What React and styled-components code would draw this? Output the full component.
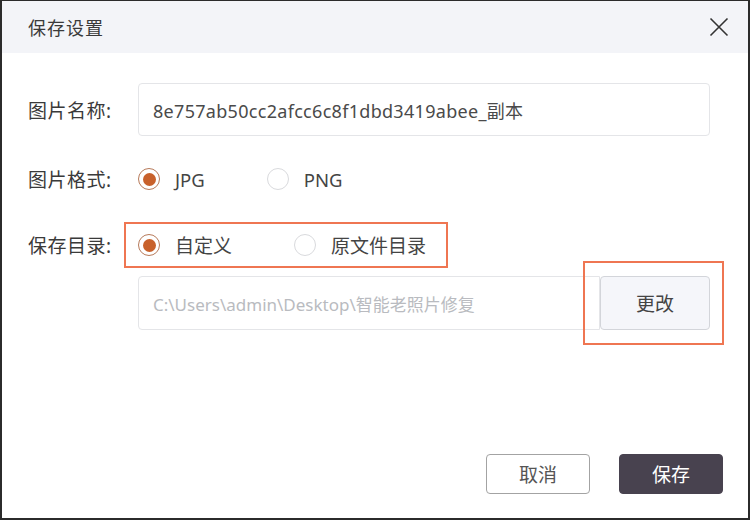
import styled, { createGlobalStyle } from "styled-components";

const GlobalStyle = createGlobalStyle`
  * { box-sizing: border-box; }
  html, body { margin: 0; padding: 0; background: #fff; }
  body {
    font-family: "Noto Sans", "Noto Sans CJK SC", sans-serif;
    color: #333;
  }
`;

const Dialog = styled.div`
  width: 750px;
  height: 520px;
  display: flex;
  flex-direction: column;
  background: #fff;
  border-style: solid;
  border-color: #2b2b2b;
  border-width: 1px 2px 2px 2px;
`;

const Header = styled.div`
  height: 52px;
  flex: none;
  display: flex;
  align-items: center;
  justify-content: space-between;
  padding: 0 16px 0 26px;
  background: #f3f4f8;
`;

const Title = styled.div`
  font-size: 18px;
  color: #3a3a3a;
  letter-spacing: 1px;
`;

const CloseButton = styled.button`
  width: 26px;
  height: 26px;
  padding: 0;
  border: none;
  background: transparent;
  display: flex;
  align-items: center;
  justify-content: center;
  cursor: pointer;
`;

const Body = styled.div`
  flex: 1;
  display: flex;
  flex-direction: column;
  padding: 30px 38px 0 26px;
`;

const Row = styled.div`
  display: flex;
  align-items: center;
  height: ${(p) => p.$h}px;
  margin-top: ${(p) => p.$mt || 0}px;
`;

const Label = styled.div`
  width: 110px;
  flex: none;
  font-size: 19px;
  color: #3a3a3a;
  letter-spacing: 0.5px;
`;

const Spacer = styled.div`
  width: 110px;
  flex: none;
`;

const TextInput = styled.input`
  flex: 1;
  height: 100%;
  min-width: 0;
  padding: 0 14px;
  border: 1px solid #e4e5e8;
  border-radius: ${(p) => (p.$joined ? "4px 0 0 4px" : "4px")};
  font-family: inherit;
  font-size: ${(p) => p.$size || 17}px;
  letter-spacing: ${(p) => p.$spacing || 0}px;
  color: ${(p) => (p.readOnly ? "#b9bbc0" : "#4a4a4a")};
  background: #fff;
  outline: none;
`;

const RadioGroup = styled.div`
  display: flex;
  align-items: center;
  gap: ${(p) => p.$gap}px;
`;

const Highlight = styled.div`
  height: 100%;
  display: flex;
  align-items: center;
  margin-left: -14px;
  padding: 0 20px 0 12px;
  border: 2px solid #ef7652;
`;

const RadioLabel = styled.label`
  display: flex;
  align-items: center;
  gap: 15px;
  font-size: ${(p) => p.$size}px;
  color: #444;
  cursor: pointer;
`;

const HiddenRadio = styled.input.attrs({ type: "radio" })`
  position: absolute;
  opacity: 0;
  width: 0;
  height: 0;
`;

const Circle = styled.span`
  width: 22px;
  height: 22px;
  border-radius: 50%;
  border: 1.5px solid ${(p) => (p.$checked ? "#b77a5a" : "#d9dadd")};
  display: flex;
  align-items: center;
  justify-content: center;

  &::after {
    content: "";
    width: 13px;
    height: 13px;
    border-radius: 50%;
    background: #c8612b;
    display: ${(p) => (p.$checked ? "block" : "none")};
  }
`;

const ChangeWrap = styled.div`
  position: relative;
  height: 100%;
  display: flex;

  &::after {
    content: "";
    position: absolute;
    top: -15px;
    bottom: -15px;
    left: -17px;
    right: -14px;
    border: 2px solid #ef7652;
    pointer-events: none;
  }
`;

const ChangeButton = styled.button`
  width: 110px;
  height: 100%;
  border: 1px solid #d3d5da;
  border-radius: 4px;
  background: #f5f6fa;
  font-family: inherit;
  font-size: 19px;
  color: #444;
  cursor: pointer;
`;

const Footer = styled.div`
  margin-top: auto;
  display: flex;
  justify-content: flex-end;
  gap: 29px;
  padding: 0 25px 24px 0;
`;

const FooterButton = styled.button`
  width: 104px;
  height: 40px;
  border-radius: 4px;
  font-family: inherit;
  font-size: 19px;
  cursor: pointer;
  border: 1px solid ${(p) => (p.$primary ? "#48424f" : "#a3a3a3")};
  background: ${(p) => (p.$primary ? "#48424f" : "#fff")};
  color: ${(p) => (p.$primary ? "#fff" : "#555")};
`;

function Radio({ name, label, checked, size = 18.5 }) {
  return (
    <RadioLabel $size={size}>
      <HiddenRadio name={name} defaultChecked={checked} />
      <Circle $checked={checked} />
      <span>{label}</span>
    </RadioLabel>
  );
}

export default function App() {
  return (
    <>
      <GlobalStyle />
      <Dialog>
        <Header>
          <Title>保存设置</Title>
          <CloseButton aria-label="关闭">
            <svg width="20" height="20" viewBox="0 0 20 20">
              <path d="M1.5 1.5 L18.5 18.5 M18.5 1.5 L1.5 18.5" stroke="#333" strokeWidth="1.6" fill="none" />
            </svg>
          </CloseButton>
        </Header>
        <Body>
          <Row $h={53}>
            <Label>图片名称:</Label>
            <TextInput $size={18} $spacing={0.3} defaultValue="8e757ab50cc2afcc6c8f1dbd3419abee_副本" />
          </Row>
          <Row $h={34} $mt={26}>
            <Label>图片格式:</Label>
            <RadioGroup $gap={62}>
              <Radio name="fmt" label="JPG" checked />
              <Radio name="fmt" label="PNG" />
            </RadioGroup>
          </Row>
          <Row $h={46} $mt={26}>
            <Label>保存目录:</Label>
            <Highlight>
              <RadioGroup $gap={62}>
                <Radio name="dir" label="自定义" size={19} checked />
                <Radio name="dir" label="原文件目录" size={19} />
              </RadioGroup>
            </Highlight>
          </Row>
          <Row $h={54} $mt={8}>
            <Spacer />
            <TextInput $joined readOnly value="C:\Users\admin\Desktop\智能老照片修复" />
            <ChangeWrap>
              <ChangeButton>更改</ChangeButton>
            </ChangeWrap>
          </Row>
        </Body>
        <Footer>
          <FooterButton>取消</FooterButton>
          <FooterButton $primary>保存</FooterButton>
        </Footer>
      </Dialog>
    </>
  );
}
